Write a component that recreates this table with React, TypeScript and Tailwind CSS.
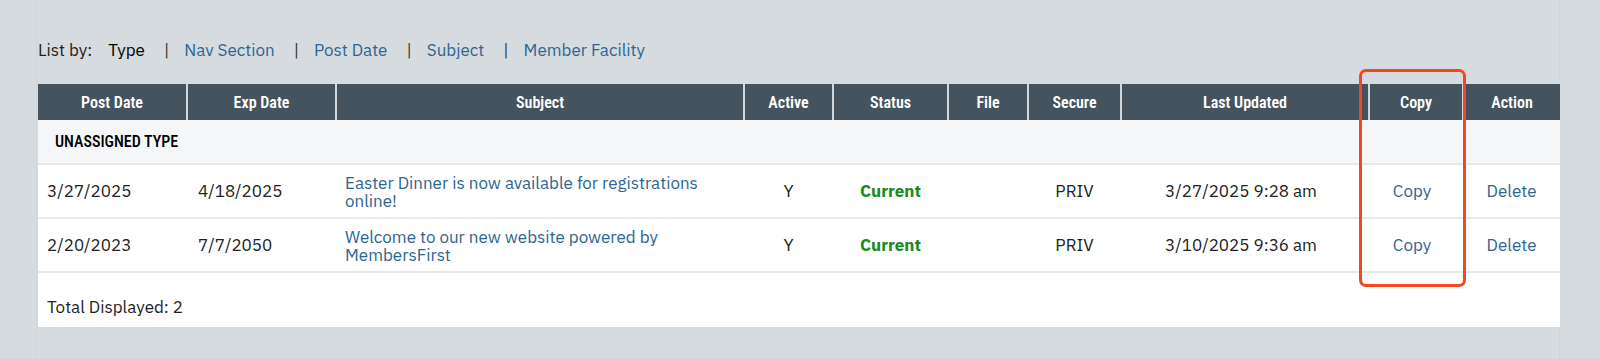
const body = { fontFamily: '"IBM Plex Sans", "Open Sans", Roboto, sans-serif' }
const cond = { fontFamily: '"Roboto Condensed", "IBM Plex Sans Condensed", Roboto, sans-serif' }

const columns = [
  { label: 'Post Date', width: 149 },
  { label: 'Exp Date', width: 149 },
  { label: 'Subject', width: 408 },
  { label: 'Active', width: 89 },
  { label: 'Status', width: 115 },
  { label: 'File', width: 80 },
  { label: 'Secure', width: 93 },
  { label: 'Last Updated', width: 248 },
  { label: 'Copy', width: 94 },
  { label: 'Action', width: 97 },
]

const rows = [
  {
    post: '3/27/2025',
    exp: '4/18/2025',
    subject: 'Easter Dinner is now available for registrations online!',
    active: 'Y',
    status: 'Current',
    secure: 'PRIV',
    updated: '3/27/2025 9:28 am',
  },
  {
    post: '2/20/2023',
    exp: '7/7/2050',
    subject: 'Welcome to our new website powered by MembersFirst',
    active: 'Y',
    status: 'Current',
    secure: 'PRIV',
    updated: '3/10/2025 9:36 am',
  },
]

const listBy = ['Nav Section', 'Post Date', 'Subject', 'Member Facility']

export default function App() {
  return (
    <div className="relative min-h-[359px] w-[1600px] bg-[#d6dbdf]" style={body}>
      <div className="ml-[36px] w-[1524px] min-h-[359px] border-x border-[#d0d5d9] pt-[39px]">
        {/* List by */}
        <div className="flex items-center h-6 pl-px text-[17px] text-[#222]">
          <span>List by:</span>
          <span className="ml-[16px] text-black">Type</span>
          {listBy.map((item) => (
            <span key={item} className="flex items-center">
              <span className="ml-[19px] mr-[15px] text-[#333]">|</span>
              <a className="text-[#2e6593] cursor-pointer">{item}</a>
            </span>
          ))}
        </div>

        {/* Table */}
        <table className="mt-[21px] ml-px w-[1522px] table-fixed border-collapse bg-white">
          <colgroup>
            {columns.map((c) => (
              <col key={c.label} style={{ width: c.width }} />
            ))}
          </colgroup>
          <thead>
            <tr className="h-[36px] bg-[#44535e]">
              {columns.map((c, i) => (
                <th
                  key={c.label}
                  className={`text-center text-[16px] font-semibold text-white p-0 pt-[2px] ${i < columns.length - 1 ? 'border-r-2 border-[#d2d8dc]' : ''}`}
                  style={cond}
                >
                  {c.label}
                </th>
              ))}
            </tr>
          </thead>
          <tbody>
            <tr className="h-[44px] bg-[#f5f6f8] border-b-2 border-[#e6e8ea]">
              <td colSpan={10} className="pl-[17px] pt-px text-[16px] font-medium uppercase text-black" style={cond}>
                Unassigned Type
              </td>
            </tr>
            {rows.map((r) => (
              <tr key={r.post} className="h-[54px] border-b-2 border-[#e6e8ea] text-[17px] text-[#222]">
                <td className="pl-[9px] pt-[2px]">{r.post}</td>
                <td className="pl-[11px] pt-[2px]">{r.exp}</td>
                <td className="pl-[9px] pr-4 pt-px">
                  <a className="block max-w-[375px] leading-[18px] text-[#2e6593] cursor-pointer">{r.subject}</a>
                </td>
                <td className="text-center pt-[2px]">{r.active}</td>
                <td className="text-center pt-[2px] font-bold text-[#1a8a1a]">{r.status}</td>
                <td />
                <td className="text-center pt-[2px]">{r.secure}</td>
                <td className="text-center pt-[2px] pr-[8px]">{r.updated}</td>
                <td className="text-center pt-[2px] pr-[8px]">
                  <a className="text-[#2e6593] cursor-pointer">Copy</a>
                </td>
                <td className="text-center pt-[2px]">
                  <a className="text-[#2e6593] cursor-pointer">Delete</a>
                </td>
              </tr>
            ))}
            <tr className="h-[55px]">
              <td colSpan={10} className="pl-[9px] pt-[16px] text-[17px] text-[#222]">
                Total Displayed: 2
              </td>
            </tr>
          </tbody>
        </table>
      </div>

      {/* annotation box */}
      <div className="absolute left-[1359px] top-[69px] w-[107px] h-[218px] rounded-[7px] border-[3px] border-[#f4471f]" />
    </div>
  )
}
